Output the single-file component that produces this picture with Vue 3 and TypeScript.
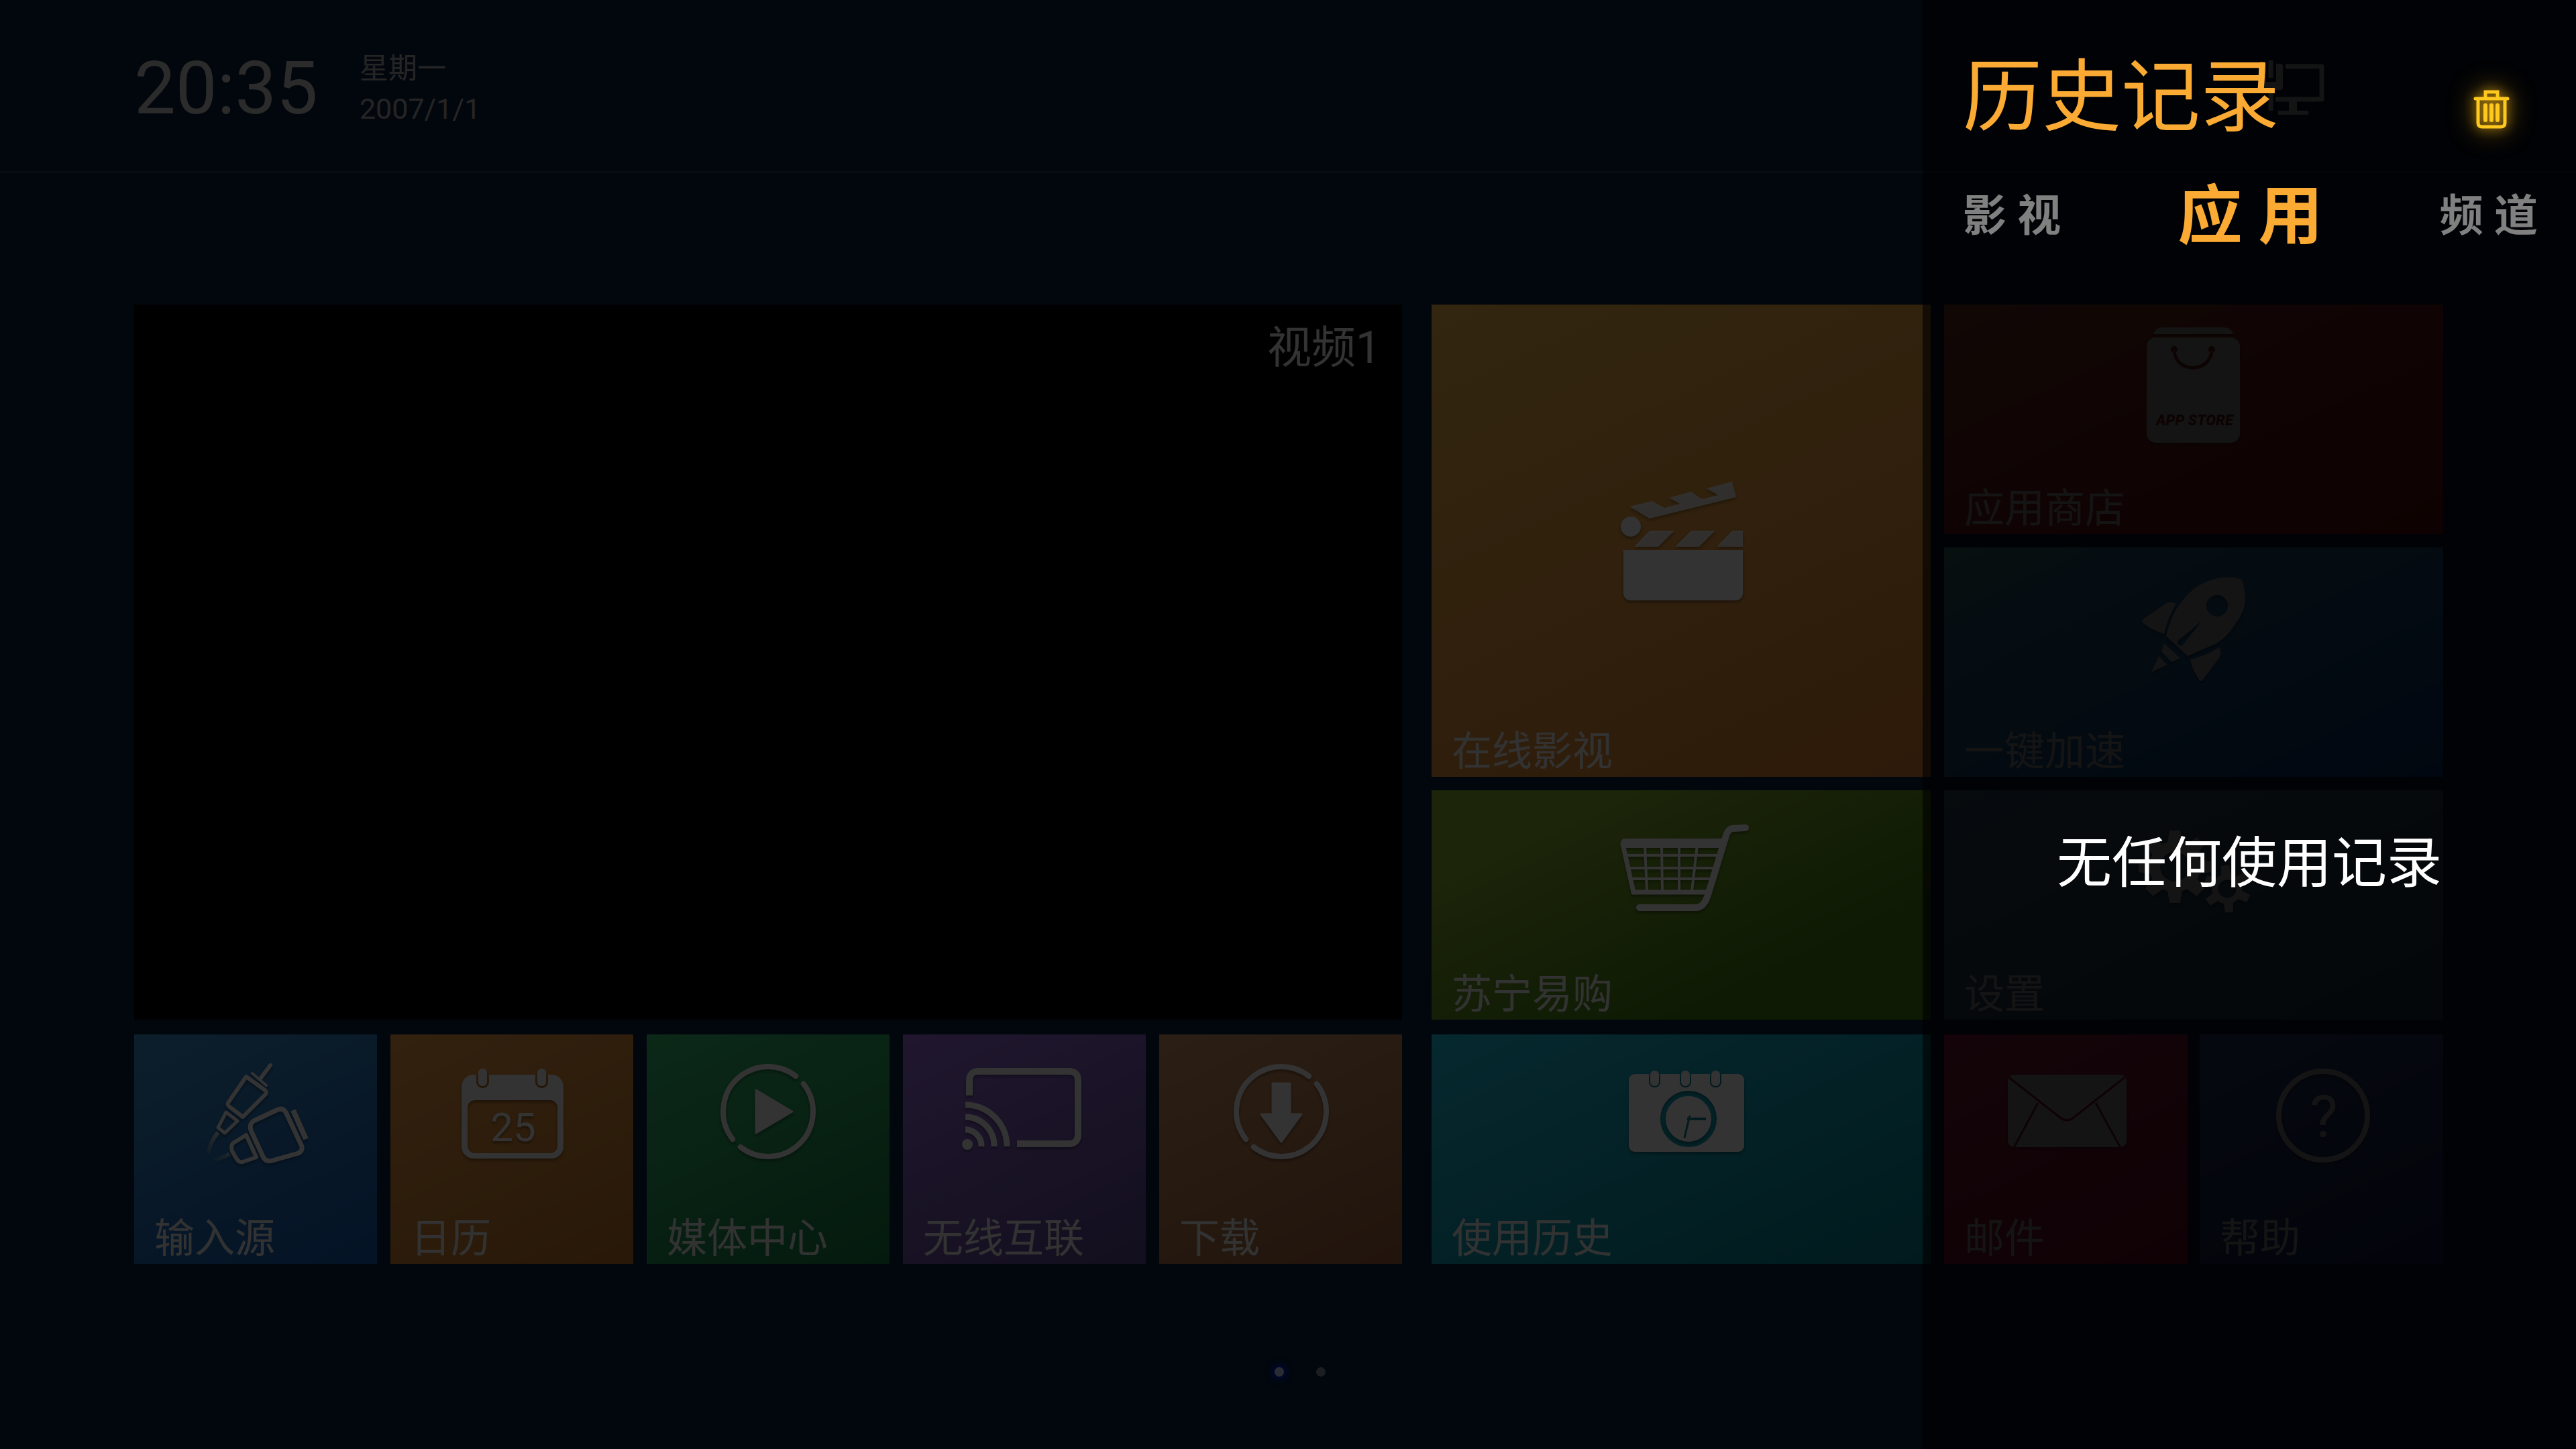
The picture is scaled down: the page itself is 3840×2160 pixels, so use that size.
<script setup lang="ts">
import { ref } from 'vue'

interface Tab {
  id: string
  label: string
}

const tabs: Tab[] = [
  { id: 'film', label: '影 视' },
  { id: 'app', label: '应 用' },
  { id: 'channel', label: '频 道' },
]
const activeTab = ref('app')

const pages = [1, 2]
const activePage = ref(1)

const bigTeeth = [0, 45, 90, 135, 180, 225, 270, 315]
const smallTeeth = [0, 60, 120, 180, 240, 300]
</script>

<template>
  <div class="screen">
    <header class="topbar">
      <time class="clock">20:35</time>
      <div class="date">
        <span>星期一</span>
        <span>2007/1/1</span>
      </div>
      <svg class="net" viewBox="0 0 96 84" aria-hidden="true">
        <g fill="none" stroke="currentColor" stroke-width="7" stroke-linejoin="round">
          <path d="M39 9H93V58H24" />
          <path d="M28 78H73" stroke-width="6" />
          <path d="M50 60V76" stroke-width="12" />
          <path d="M17 0V26M17 44V75" />
        </g>
        <path d="M0 5H10V32H25V5H31Q35 5 35 9V40Q35 44 31 44H4Q0 44 0 40Z" fill="currentColor" />
      </svg>
    </header>

    <main class="board">
      <section class="left">
        <div class="video"><span>视频1</span></div>
        <div class="row">
          <button class="tile input" type="button">
            <svg class="icon" viewBox="0 0 200 200" aria-hidden="true">
              <defs>
                <linearGradient id="fadeCable" gradientUnits="userSpaceOnUse" x1="60" y1="126" x2="30" y2="168">
                  <stop offset="0" stop-color="#fff" />
                  <stop offset="1" stop-color="#fff" stop-opacity="0" />
                </linearGradient>
              </defs>
              <g fill="none" stroke="#fff" stroke-width="6" stroke-linejoin="round" stroke-linecap="round">
                <path d="M122 26L107 46" />
                <path d="M95 38L116 56" stroke-width="4" />
                <path d="M86 43L114 63Q117 66 115 69L81 103L60 87Q58 85 59 82Z" />
                <path d="M56 96L73 109L54 127L44 119Z" stroke-width="5" />
                <path d="M133 92Q141 89 145 96L169 147Q170 154 164 157L125 168Q115 171 111 162L93 123Q90 114 97 109Z" stroke-width="7" />
                <path d="M156 93L175 136" stroke-width="8" stroke-linecap="butt" />
                <path d="M86 130L101 163L81 170Q75 171 72 166L65 154Q62 145 68 141Z" />
              </g>
              <path d="M44 126Q31 142 30 158M61 158Q50 165 38 168" fill="none" stroke="url(#fadeCable)" stroke-width="6" />
            </svg>
            <span class="label">输入源</span>
          </button>

          <button class="tile calendar" type="button">
            <svg class="icon" viewBox="0 0 200 200" aria-hidden="true">
              <mask id="calendarCut">
                <rect width="200" height="200" fill="#fff" />
                <rect x="34" y="78" width="134" height="79" rx="11" fill="#000" />
                <rect x="47" y="28" width="19" height="32" rx="9" fill="#000" />
                <rect x="135" y="28" width="19" height="32" rx="9" fill="#000" />
              </mask>
              <rect x="25" y="40" width="152" height="125" rx="18" fill="#fff" mask="url(#calendarCut)" />
              <rect x="50" y="31" width="13" height="26" rx="6" fill="#fff" />
              <rect x="138" y="31" width="13" height="26" rx="6" fill="#fff" />
              <text class="day" x="102" y="139" text-anchor="middle">25</text>
            </svg>
            <span class="label">日历</span>
          </button>

          <button class="tile media" type="button">
            <svg class="icon" viewBox="0 0 200 200" aria-hidden="true">
              <circle class="ring" cx="100" cy="95" r="67" pathLength="360" transform="rotate(-38 100 95)" />
              <path d="M82 63L136 95L82 127Z" fill="#fff" stroke="#fff" stroke-width="3" stroke-linejoin="round" />
            </svg>
            <span class="label">媒体中心</span>
          </button>

          <button class="tile wireless" type="button">
            <svg class="icon" viewBox="0 0 200 200" aria-hidden="true">
              <g fill="none" stroke="#fff" stroke-width="9">
                <path d="M18 71V49Q18 35 32 35H166Q180 35 180 49V129Q180 143 166 143H89" stroke-width="10" />
                <path d="M12 85A62 62 0 0 1 74 147" />
                <path d="M12 103A43 43 0 0 1 55 147" />
                <path d="M12 122A24 24 0 0 1 36 147" />
              </g>
              <circle cx="15" cy="144" r="8" fill="#fff" />
            </svg>
            <span class="label">无线互联</span>
          </button>

          <button class="tile download" type="button">
            <svg class="icon" viewBox="0 0 200 200" aria-hidden="true">
              <circle class="ring" cx="101" cy="95" r="67" pathLength="360" transform="rotate(-38 101 95)" />
              <path d="M88 53H114V99H131L101 140L71 99H88Z" fill="#fff" stroke="#fff" stroke-width="3" stroke-linejoin="round" />
            </svg>
            <span class="label">下载</span>
          </button>
        </div>
      </section>

      <section class="right">
        <div class="upper">
          <button class="tile online" type="button">
            <svg class="icon" viewBox="0 0 200 200" aria-hidden="true">
              <g fill="#fff">
                <path d="M14 113H192V176Q192 188 180 188H26Q14 188 14 176Z" />
                <circle cx="25" cy="78" r="15" />
                <g opacity="0.85">
                  <path d="M53 84H90L66 108H30ZM115 84H151L127 108H91ZM176 84H192V108H153Z" />
                  <path d="M53 66L182 34L176 11L138 21L155 31L131 37L115 26L82 35L98 44L75 50L57 40L23 48Z" />
                </g>
              </g>
            </svg>
            <span class="label">在线影视</span>
          </button>

          <button class="tile store" type="button">
            <svg class="icon" viewBox="0 0 200 200" aria-hidden="true">
              <mask id="storeCut">
                <rect width="200" height="200" fill="#fff" />
                <g fill="none" stroke="#000" stroke-width="5">
                  <path d="M71 48C72 83 126 83 127 48" />
                </g>
                <circle cx="71" cy="47" r="5" />
                <circle cx="127" cy="47" r="5" />
                <text class="brand" x="44" y="160">APP STORE</text>
              </mask>
              <g fill="#fff" mask="url(#storeCut)">
                <path d="M40 24Q43 14 54 14H145Q156 14 159 24Z" />
                <rect x="30" y="29" width="139" height="157" rx="14" />
              </g>
            </svg>
            <span class="label">应用商店</span>
          </button>

          <button class="tile boost" type="button">
            <svg class="icon" viewBox="0 0 200 200" aria-hidden="true">
              <path
                fill="#fff"
                fill-rule="evenodd"
                d="M172 28C182 58 176 76 164 91C153 110 142 119 132 124L91 142L59 112C64 92 70 76 80 64C95 42 112 34 122 30C141 23 158 23 172 28ZM135 51A16 16 0 1 0 135 83A16 16 0 1 0 135 51ZM112 90L78 118C73 123 79 130 85 124Z"
              />
              <g fill="#fff">
                <path d="M74 64Q66 60 61 62L25 87Q21 91 26 94Q40 104 56 109Q62 84 74 64Z" />
                <path d="M95 147Q120 141 138 129Q143 137 138 145L114 177Q111 181 108 177Q98 163 95 147Z" />
                <path d="M56 123L80 145L67 151L52 135Z" />
                <path d="M48 142L60 155L37 166Z" />
              </g>
            </svg>
            <span class="label">一键加速</span>
          </button>

          <button class="tile shop" type="button">
            <svg class="icon" viewBox="0 0 200 200" aria-hidden="true">
              <g fill="none" stroke="#fff" stroke-linejoin="round" stroke-linecap="round">
                <path d="M196 36L177 37Q169 38 166 51L140 136Q134 155 122 155H38" stroke-width="10" />
                <path d="M29 132L13 60" stroke-width="7" />
                <path d="M29 132H140" stroke-width="7" />
                <path d="M17 77H158M21 96H152M25 112H148M46 62L49 130M71 62L72 130M97 62V130M124 62L116 130" stroke-width="4" />
              </g>
              <path d="M14 52H166L160 66H14Q6 58 14 52Z" fill="#fff" />
            </svg>
            <span class="label">苏宁易购</span>
          </button>

          <button class="tile settings" type="button">
            <svg class="icon" viewBox="0 0 200 200" aria-hidden="true">
              <g transform="translate(72 94)">
                <circle r="30" fill="none" stroke="#fff" stroke-width="16" />
                <path v-for="a in bigTeeth" :key="a" d="M-11 -35L-8 -54H8L11 -35Z" fill="#fff" :transform="`rotate(${a})`" />
              </g>
              <g transform="translate(150 127) rotate(-5)">
                <circle r="18" fill="none" stroke="#fff" stroke-width="9" />
                <path v-for="a in smallTeeth" :key="a" d="M-7 -20L-6 -35H6L7 -20Z" fill="#fff" :transform="`rotate(${a})`" />
              </g>
            </svg>
            <span class="label">设置</span>
          </button>
        </div>

        <div class="lower">
          <button class="tile history" type="button">
            <svg class="icon" viewBox="0 0 200 200" aria-hidden="true">
              <mask id="historyCut">
                <rect width="200" height="200" fill="#fff" />
                <rect x="52" y="30" width="17" height="29" rx="8" />
                <rect x="98" y="30" width="17" height="29" rx="8" />
                <rect x="143" y="30" width="17" height="29" rx="8" />
                <circle cx="111" cy="106" r="38" fill="none" stroke="#000" stroke-width="8" />
                <path d="M109 106H137" stroke="#000" stroke-width="4" />
                <path d="M113 101L105 134" stroke="#000" stroke-width="3" />
              </mask>
              <rect x="22" y="39" width="172" height="116" rx="9" fill="#fff" mask="url(#historyCut)" />
              <g fill="#fff">
                <rect x="54" y="34" width="13" height="23" rx="6" />
                <rect x="100" y="34" width="13" height="23" rx="6" />
                <rect x="145" y="34" width="13" height="23" rx="6" />
              </g>
            </svg>
            <span class="label">使用历史</span>
          </button>

          <div class="pair">
            <button class="tile mail" type="button">
              <svg class="icon" viewBox="0 0 200 200" aria-hidden="true">
                <mask id="mailCut">
                  <rect width="200" height="200" fill="#fff" />
                  <g fill="none" stroke="#000" stroke-width="3">
                    <path d="M12 42L91 104Q101 112 111 104L190 42" />
                    <path d="M58 82L22 149M144 82L181 149" />
                  </g>
                </mask>
                <rect x="13" y="40" width="177" height="108" rx="9" fill="#fff" mask="url(#mailCut)" />
              </svg>
              <span class="label">邮件</span>
            </button>

            <button class="tile help" type="button">
              <svg class="icon" viewBox="0 0 200 200" aria-hidden="true">
                <circle cx="102" cy="101" r="66" fill="none" stroke="#fff" stroke-width="8" />
                <text class="question" x="103" y="132" text-anchor="middle">?</text>
              </svg>
              <span class="label">帮助</span>
            </button>
          </div>
        </div>
      </section>
    </main>

    <nav class="pager" aria-label="页面">
      <button
        v-for="p in pages"
        :key="p"
        type="button"
        class="dot"
        :class="{ on: p === activePage }"
        :aria-label="`第${p}页`"
        @click="activePage = p"
      ></button>
    </nav>

    <div class="dim"></div>

    <aside class="panel">
      <div class="panel-head">
        <h1>历史记录</h1>
        <button class="trash" type="button" aria-label="清空">
          <svg viewBox="0 0 54 58" aria-hidden="true">
            <g fill="none" stroke="currentColor" stroke-width="5" stroke-linecap="round">
              <path d="M18 11V3H36V11" />
              <path d="M3 13H51" />
              <path d="M7 14V49Q7 55 13 55H41Q47 55 47 49V14" />
              <path d="M18 23V45M27 23V45M36 23V45" stroke-width="6" />
            </g>
          </svg>
        </button>
      </div>
      <div class="tabs" role="tablist">
        <button
          v-for="t in tabs"
          :key="t.id"
          type="button"
          role="tab"
          class="tab"
          :class="{ active: t.id === activeTab }"
          :aria-selected="t.id === activeTab"
          @click="activeTab = t.id"
        >{{ t.label }}</button>
      </div>
      <p class="empty">无任何使用记录</p>
    </aside>
  </div>
</template>

<style>
body {
  background: #02060d;
}
</style>

<style scoped>
.screen {
  position: relative;
  display: flex;
  flex-direction: column;
  min-height: 100vh;
  overflow: hidden;
  background: #0a1e41;
  color: #fff;
  font-family: Roboto, "Noto Sans CJK SC", sans-serif;
}

button {
  margin: 0;
  padding: 0;
  border: 0;
  background: none;
  color: inherit;
  font: inherit;
  cursor: pointer;
}

.topbar {
  display: flex;
  align-items: center;
  gap: 62px;
  padding: 72px 376px 63px 200px;
  border-bottom: 3px solid rgba(255, 255, 255, 0.14);
}

.clock {
  font-size: 110px;
  line-height: 112px;
  color: #d4d4d4;
}

.date {
  display: flex;
  flex-direction: column;
  font-size: 43px;
  line-height: 60px;
  color: #b8b8b8;
}

.net {
  width: 96px;
  height: 84px;
  margin-left: auto;
  overflow: visible;
}

.board {
  display: grid;
  grid-template-columns: 1890fr 1508fr;
  gap: 44px;
  padding: 196px 198px 0 200px;
}

.left,
.right {
  display: flex;
  flex-direction: column;
  gap: 22px;
}

.video {
  flex: 1;
  padding: 32px;
  background: #000;
  font-size: 66px;
  line-height: 66px;
  text-align: right;
}

.row {
  display: grid;
  grid-template-columns: repeat(5, 1fr);
  gap: 20px;
}

.upper,
.lower {
  display: grid;
  grid-template-columns: 1fr 1fr;
  gap: 20px;
}

.pair {
  display: grid;
  grid-template-columns: 1fr 1fr;
  gap: 18px;
}

.tile {
  display: flex;
  flex-direction: column;
  justify-content: space-between;
  min-height: 342px;
  padding: 20px 30px 7px;
  text-align: left;
}

.icon {
  align-self: center;
  width: 200px;
  height: 200px;
  overflow: visible;
  filter: drop-shadow(0 3px 2px rgba(0, 0, 0, 0.35));
}

.ring {
  fill: none;
  stroke: #fff;
  stroke-width: 8px;
  stroke-linecap: round;
  stroke-dasharray: 166 14;
}

.label {
  font-size: 60px;
  line-height: 60px;
  white-space: nowrap;
  color: #fafafa;
}

.online {
  grid-row: span 2;
}

.online .icon {
  margin: auto;
  transform: translateY(24px);
}

.day {
  fill: #fff;
  font-size: 60px;
}

.brand {
  font-size: 22px;
  font-style: italic;
  font-weight: 900;
}

.question {
  fill: #fff;
  font-size: 88px;
}

.input {
  background: linear-gradient(155deg, #4196d7, #145fb9);
}

.calendar {
  background: linear-gradient(155deg, #faa54b, #c87828);
}

.media {
  background: linear-gradient(155deg, #3cc878, #148246);
}

.wireless {
  background: linear-gradient(155deg, #a073e6, #5f4b96);
}

.download {
  background: linear-gradient(155deg, #d79b69, #a5643c);
}

.online {
  background: linear-gradient(155deg, #fabe50, #e18232);
}

.shop {
  background: linear-gradient(155deg, #8cb432 20%, #468214 75%);
}

.history {
  background: linear-gradient(155deg, #1ec8e6, #058291);
}

.store {
  background: linear-gradient(155deg, #d75f46, #aa1414);
}

.boost {
  background: linear-gradient(155deg, #5fc3be, #46a5e1 20%, #0f5fd2);
}

.settings {
  background: linear-gradient(155deg, #5a8cb4, #325a78);
}

.mail {
  background: linear-gradient(155deg, #fa3c78, #be143c);
}

.help {
  background: linear-gradient(155deg, #506ec8, #28378c);
}

.pager {
  display: flex;
  justify-content: center;
  gap: 48px;
  padding: 154px 0 108px 36px;
}

.dot {
  width: 14px;
  height: 14px;
  border-radius: 50%;
  background: rgba(255, 255, 255, 0.5);
}

.dot.on {
  background: #d2dcff;
  box-shadow: 0 0 8px 4px #0028ff;
}

.dim {
  position: absolute;
  inset: 0;
  background: rgba(0, 0, 0, 0.8);
}

.panel {
  position: absolute;
  top: 0;
  right: 0;
  bottom: 0;
  display: flex;
  flex-direction: column;
  width: 974px;
  background: rgba(0, 0, 0, 0.6);
}

.panel-head {
  display: flex;
  align-items: flex-end;
  justify-content: space-between;
  padding: 86px 99px 0 60px;
}

h1 {
  margin: 0;
  color: #fbab33;
  font-size: 118px;
  font-weight: 400;
  line-height: 120px;
}

.trash {
  width: 54px;
  height: 58px;
  margin-bottom: 14px;
  color: #ffc81e;
}

.trash svg {
  display: block;
  width: 54px;
  height: 58px;
  overflow: visible;
  filter: drop-shadow(0 0 8px rgba(255, 190, 20, 0.6)) drop-shadow(0 0 18px rgba(255, 190, 20, 0.6));
}

.tabs {
  display: flex;
  align-items: center;
  justify-content: space-between;
  padding: 56px 57px 0 60px;
}

.tab {
  color: #808080;
  font-size: 65px;
  font-weight: 700;
  line-height: 120px;
  white-space: nowrap;
}

.tab.active {
  color: #fbab33;
  font-size: 96px;
}

.empty {
  display: flex;
  flex: 1;
  align-items: center;
  justify-content: center;
  margin: 0;
  padding-top: 32px;
  font-size: 82px;
  line-height: 96px;
}
</style>
